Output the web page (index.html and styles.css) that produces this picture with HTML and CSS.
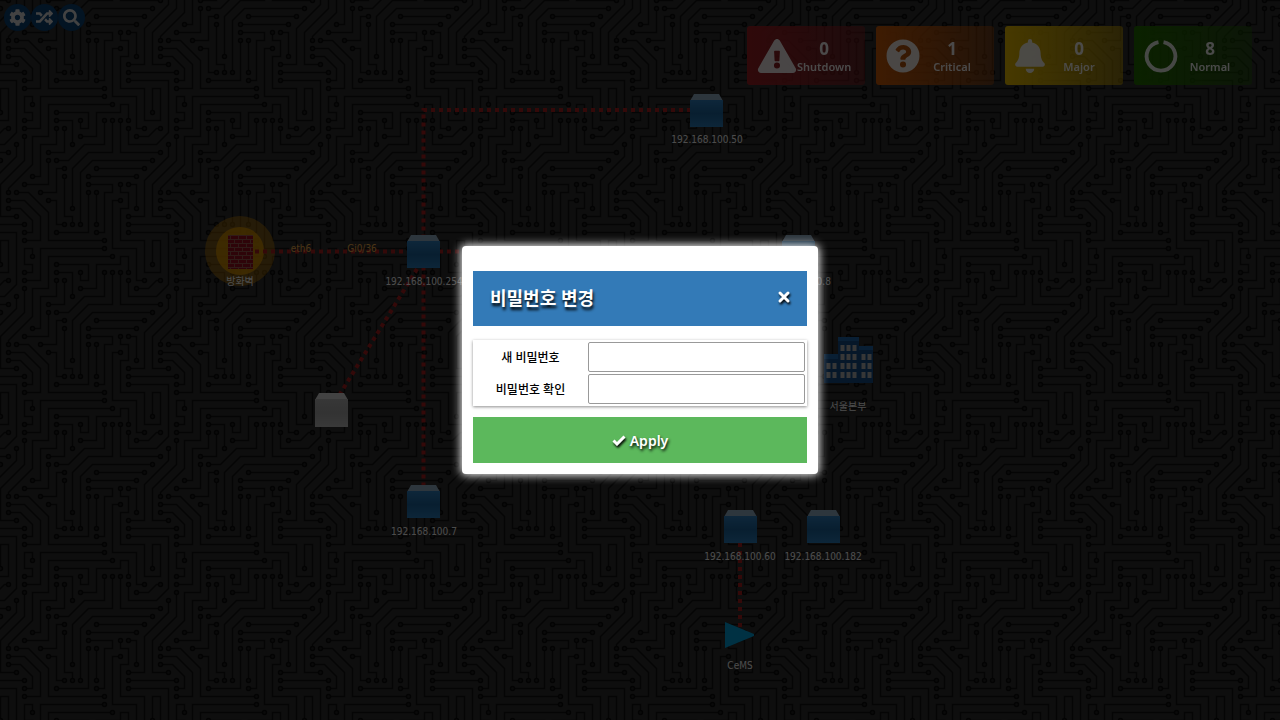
FILE: index.html
```html
<!DOCTYPE html>
<html lang="ko">
<head>
<meta charset="utf-8">
<title>비밀번호 변경</title>
<link rel="stylesheet" href="styles.css">
</head>
<body>
<svg class="map" aria-label="Network map">
  <defs>
    <marker id="pad" markerUnits="userSpaceOnUse" markerWidth="8" markerHeight="8" refX="4" refY="4">
      <circle class="pad" cx="4" cy="4" r="2"/>
    </marker>
    <g id="traces" class="traces">
      <path d="M120 120V152H160"/>
      <path d="M72 208V168L88 152H112V120"/>
      <path d="M104 120V144H84L68 160H56"/>
      <path d="M152 160H92L80 172V224"/>
      <path d="M96 168H144"/>
      <path d="M88 176H136"/>
      <path d="M88 32H112V40H104V80H96"/>
      <path d="M120 32V40H128V56H120V88H144V120H160V88H152V112"/>
      <path d="M120 48H112V96H136V128H144"/>
      <path d="M128 32H136V56"/>
      <path d="M96 40V72"/>
      <path d="M88 40V80H56"/>
      <path d="M48 48H56V72H64"/>
      <path d="M64 24V64H72V72"/>
      <path d="M64 16H56V40H40"/>
      <path d="M48 8V32H24"/>
      <path d="M56 128V144H40V176H32"/>
      <path d="M64 128V152H48"/>
      <path d="M56 120H72V144"/>
      <path d="M56 112H88V128H80V120"/>
      <path d="M80 136H96V112H120V104H128V120"/>
      <path d="M128 128V144H156L168 132V80H128"/>
      <path d="M136 136H148L156 128H160"/>
      <path d="M112 104H48V136H32V164L8 188V192"/>
      <path d="M104 96H40V128H24"/>
      <path d="M104 88H48V60L28 40H16"/>
      <path d="M8 48H24L40 64V88H24"/>
      <path d="M8 56H20L32 68V80H24"/>
      <path d="M128 72H176"/>
      <path d="M168 216H152V184L176 160V136"/>
      <path d="M128 216H144V180L168 156V144"/>
      <path d="M32 104V96H24V112H32V120H24"/>
    </g>
    <pattern id="board" width="152" height="152" patternUnits="userSpaceOnUse">
      <g transform="translate(.5 .5)">
        <use href="#traces"/>
        <use href="#traces" x="-152"/>
        <use href="#traces" y="-152"/>
        <use href="#traces" x="-152" y="-152"/>
      </g>
    </pattern>
    <linearGradient id="blueFace" x2="0" y2="1">
      <stop offset="0" stop-color="#2f82c4"/>
      <stop offset=".5" stop-color="#1c67a0"/>
      <stop offset="1" stop-color="#2c80c0"/>
    </linearGradient>
    <linearGradient id="greyFace" x2="0" y2="1">
      <stop offset="0" stop-color="#b8b8b8"/>
      <stop offset=".5" stop-color="#aaa"/>
      <stop offset="1" stop-color="#c0c0c0"/>
    </linearGradient>
    <g id="box">
      <path fill="#98b4cc" d="M-12-17H13L17-10H-16Z"/>
      <path fill="url(#blueFace)" d="M-16-11H17V16H-16Z"/>
    </g>
    <pattern id="bricks" width="8" height="8" patternUnits="userSpaceOnUse" x="228" y="235">
      <rect width="8" height="8" fill="#9c1020"/>
      <path d="M0 .5H8M0 4.500H8M2.500 .5V4.500M6.500 4.500V8" stroke="#a05a50" fill="none"/>
    </pattern>
  </defs>

  <rect class="ground" width="100%" height="100%"/>
  <rect width="100%" height="100%" fill="url(#board)"/>

  <circle cx="240" cy="251" r="35" fill="#ffa500" opacity=".38"/>
  <circle cx="240" cy="251" r="24" fill="#e09800" opacity=".8"/>

  <g class="edges">
    <path d="M691 110H423.500V486"/>
    <path d="M255 251.500H790"/>
    <path d="M417 269L340 394"/>
    <path d="M740 543V628"/>
  </g>

  <rect x="228" y="235" width="25" height="34" fill="url(#bricks)"/>
  <use href="#box" x="706" y="111"/>
  <use href="#box" x="423" y="252"/>
  <use href="#box" x="798" y="252"/>
  <use href="#box" x="423" y="502"/>
  <use href="#box" x="740" y="527"/>
  <use href="#box" x="823" y="527"/>
  <path fill="#dcdcdc" d="M319 393H344L348 400H315Z"/>
  <path fill="url(#greyFace)" d="M315 399H348V427H315Z"/>
  <path fill="#00a5e0" d="M725 622L754 634V636L725 648Z"/>

  <g>
    <path fill="#2069b0" d="M824 354H838V383H824ZM838 337H859V383H838ZM859 346H873V383H859Z"/>
    <path fill="#174f8a" d="M824 359H838V383H824ZM838 341H859V383H838ZM859 350H873V383H859Z"/>
    <path class="windows" d="M842.500 345V378M848.500 345V378M854.500 345V378M863.500 354V378M869.500 354V378M828.500 363V378M834.500 363V378"/>
  </g>

  <g class="labels">
    <text x="707" y="143">192.168.100.50</text>
    <text x="424" y="285">192.168.100.254</text>
    <text x="798" y="285">192.168.100.8</text>
    <text x="240" y="285">방화벽</text>
    <text x="848" y="410">서울본부</text>
    <text x="424" y="535">192.168.100.7</text>
    <text x="740" y="560">192.168.100.60</text>
    <text x="823" y="560">192.168.100.182</text>
    <text x="740" y="669">CeMS</text>
    <text class="port" x="301" y="252">eth6</text>
    <text class="port" x="362" y="252">Gi0/36</text>
  </g>
</svg>

<nav class="tools">
  <button class="tool" aria-label="Settings"><svg viewBox="0 0 512 512"><path d="M487.400 315.700l-42.600-24.600c4.300-23.200 4.300-47 0-70.200l42.600-24.600c4.900-2.800 7.100-8.600 5.500-14-11.100-35.600-30-67.800-54.700-94.600-3.800-4.100-10-5.100-14.800-2.300L380.800 110c-17.900-15.400-38.500-27.300-60.800-35.100V25.800c0-5.600-3.900-10.500-9.400-11.700-36.700-8.200-74.300-7.800-109.200 0-5.500 1.200-9.400 6.100-9.400 11.700V75c-22.200 7.900-42.800 19.800-60.800 35.100L88.700 85.500c-4.900-2.800-11-1.900-14.800 2.300-24.700 26.700-43.600 58.900-54.700 94.600-1.700 5.400.6 11.200 5.500 14L67.300 221c-4.300 23.200-4.300 47 0 70.200l-42.600 24.600c-4.900 2.800-7.100 8.600-5.500 14 11.100 35.600 30 67.800 54.700 94.600 3.800 4.100 10 5.100 14.800 2.300l42.600-24.600c17.900 15.400 38.500 27.300 60.800 35.100v49.200c0 5.600 3.900 10.500 9.400 11.700 36.700 8.200 74.300 7.800 109.200 0 5.500-1.200 9.400-6.100 9.400-11.700v-49.200c22.200-7.900 42.800-19.800 60.800-35.100l42.600 24.600c4.900 2.800 11 1.900 14.800-2.300 24.700-26.700 43.600-58.900 54.700-94.600 1.500-5.500-.7-11.300-5.600-14.100zM256 336c-44.100 0-80-35.900-80-80s35.900-80 80-80 80 35.900 80 80-35.900 80-80 80z"/></svg></button>
  <button class="tool" aria-label="Shuffle"><svg viewBox="0 0 512 512"><path d="M505 359c9 9 9 25 0 34l-80 80c-15 15-41 4-41-17v-40h-58c-3 0-7-1-9-4l-70-75 53-57 53 56h31v-40c0-21 26-32 41-17zM12 176h84l53 56 53-57-70-75c-2-3-5-4-9-4H12c-7 0-12 5-12 12v56c0 7 5 12 12 12zm372 0v40c0 21 26 32 41 17l80-80c9-9 9-25 0-34l-80-80c-15-15-41-4-41 17v40h-58c-3 0-7 1-9 4L96 336H12c-7 0-12 5-12 12v56c0 7 5 12 12 12h111c4 0 7-1 9-4l221-236z"/></svg></button>
  <button class="tool" aria-label="Search"><svg viewBox="0 0 512 512"><path d="M505 442.700L405.300 343c-4.500-4.500-10.600-7-17-7H372c27.600-35.300 44-79.700 44-128C416 93.100 322.900 0 208 0S0 93.100 0 208s93.100 208 208 208c48.300 0 92.700-16.400 128-44v16.300c0 6.400 2.500 12.500 7 17l99.700 99.700c9.400 9.400 24.600 9.400 33.900 0l28.300-28.300c9.400-9.400 9.400-24.600.1-34zM208 336c-70.700 0-128-57.200-128-128 0-70.700 57.200-128 128-128 70.700 0 128 57.200 128 128 0 70.700-57.200 128-128 128z"/></svg></button>
</nav>

<section class="status" aria-label="Status">
  <article class="card shutdown">
    <svg class="wide" viewBox="0 0 576 512"><path d="M569.500 440c18.500 32-4.700 72-41.600 72H48.100c-36.900 0-60-40-41.600-72L246.400 24c18.500-32 64.700-32 83.200 0zM288 354a46 46 0 1 0 0 92 46 46 0 0 0 0-92zm-43.700-165.300l7.400 136c.4 6.400 5.600 11.300 12 11.300h48.500c6.400 0 11.600-5 12-11.300l7.400-136c.4-6.900-5.100-12.700-12-12.700h-63.400c-6.800 0-12.300 5.800-11.900 12.700z"/></svg>
    <p class="count"><strong>0</strong><span>Shutdown</span></p>
  </article>
  <article class="card critical">
    <svg viewBox="0 0 512 512"><path d="M504 256a248 248 0 1 1-496 0 248 248 0 0 1 496 0zM262.700 90c-54.500 0-89.300 23-116.500 63.800-3.500 5.300-2.400 12.400 2.700 16.300l34.700 26.300c5.200 3.900 12.600 3 16.700-2.100 17.800-22.700 30.100-35.800 57.300-35.800 20.400 0 45.700 13.100 45.700 33 0 15-12.400 22.700-32.500 34C247.100 238.500 216 254.900 216 296v4c0 6.600 5.400 12 12 12h56c6.600 0 12-5.400 12-12v-1.300c0-28.500 83.200-29.600 83.200-106.700 0-58-60.200-102-116.500-102zM256 338a46 46 0 1 0 0 92 46 46 0 0 0 0-92z"/></svg>
    <p class="count"><strong>1</strong><span>Critical</span></p>
  </article>
  <article class="card major">
    <svg class="narrow" viewBox="0 0 448 512"><path d="M224 512c35.300 0 64-28.700 64-64H160c0 35.300 28.600 64 64 64zm215.400-149.700c-19.300-20.800-55.500-52-55.500-154.300 0-77.700-54.500-139.900-127.900-155.200V32a32 32 0 1 0-64 0v20.800C118.600 68.100 64.100 130.300 64.100 208c0 102.300-36.200 133.500-55.500 154.300-6 6.400-8.700 14.100-8.600 21.700.1 16.400 13 32 32.100 32h383.800c19.100 0 32-15.600 32.100-32 0-7.600-2.600-15.300-8.600-21.700z"/></svg>
    <p class="count"><strong>0</strong><span>Major</span></p>
  </article>
  <article class="card normal">
    <svg viewBox="0 0 512 512"><path class="ring" d="M294 47A216 216 0 1 1 218 47"/></svg>
    <p class="count"><strong>8</strong><span>Normal</span></p>
  </article>
</section>

<div class="overlay">
  <form class="dialog" role="dialog" aria-labelledby="title">
    <header class="heading">
      <h1 id="title">비밀번호 변경</h1>
      <button type="button" class="close" aria-label="Close"><svg viewBox="0 0 12 12"><path d="M2 2L10 10M10 2L2 10"/></svg></button>
    </header>
    <div class="fields">
      <label for="pw">새 비밀번호</label><input id="pw" type="password">
      <label for="pw2">비밀번호 확인</label><input id="pw2" type="password">
    </div>
    <button type="button" class="apply"><svg viewBox="0 0 14 12"><path d="M1.500 6.500L5 10L12.500 2.500"/></svg>Apply</button>
  </form>
</div>
</body>
</html>
```
FILE: styles.css
```css
* { box-sizing: border-box; }

body {
  margin: 0;
  min-height: 100vh;
  overflow: hidden;
  background: #323232;
  font-family: "Noto Sans", "Noto Sans CJK KR", sans-serif;
}

button {
  border: 0;
  padding: 0;
  font: inherit;
  cursor: pointer;
}

/* Network map */
.map {
  position: fixed;
  inset: 0;
  width: 100%;
  height: 100%;
}
.ground { fill: #2f2f2f; }
.traces path {
  fill: none;
  stroke: #111;
  stroke-width: 1.5px;
  marker-start: url(#pad);
  marker-end: url(#pad);
}
.pad {
  fill: #242424;
  stroke: #0c0c0c;
  stroke-width: 1.5px;
}
.edges path {
  fill: none;
  stroke: #b02020;
  stroke-width: 4px;
  stroke-dasharray: 4 4;
}
.windows {
  fill: none;
  stroke: #b8b8b8;
  stroke-width: 4px;
  stroke-dasharray: 6 3;
}
.labels {
  fill: #fff;
  font: 10px "DejaVu Sans Condensed", "Noto Sans CJK KR", sans-serif;
  text-anchor: middle;
}
.port { fill: #f5b04a; }

/* Tool buttons */
.tools {
  position: fixed;
  top: 4px;
  left: 4px;
  display: flex;
}
.tool {
  display: grid;
  place-items: center;
  width: 27px;
  height: 27px;
  border-radius: 50%;
  background: #0b4376;
}
.tool svg {
  width: 17px;
  height: 17px;
  fill: #ddd;
}

/* Status cards */
.status {
  position: fixed;
  top: 26px;
  right: 28px;
  display: flex;
  gap: 11px;
}
.card {
  display: flex;
  align-items: center;
  width: 118px;
  height: 59px;
  padding-left: 10px;
  border-radius: 3px;
  color: #fff;
}
.card svg {
  flex: none;
  width: 34px;
  height: 34px;
  fill: #fff;
  opacity: 0.9;
}
.card .wide { width: 40px; }
.card .narrow { width: 30px; }
.card .ring {
  fill: none;
  stroke: #fff;
  stroke-width: 58px;
}
.count {
  flex: 1;
  display: flex;
  flex-direction: column;
  margin: 0;
  padding: 2px 12px 0 2px;
  text-align: center;
  opacity: 0.95;
}
.card .wide + .count { flex: none; padding: 2px 0 0; }
.count strong { font-size: 17px; line-height: 20px; }
.count span { font-size: 11px; font-weight: 600; line-height: 16px; }
.shutdown { background: linear-gradient(to right, #a02024, rgba(160, 32, 36, 0.45)); }
.critical { background: linear-gradient(to right, #d05c08, rgba(208, 92, 8, 0.4)); }
.major { background: linear-gradient(to right, #eec000, rgba(238, 192, 0, 0.5)); }
.normal { background: linear-gradient(to right, #247000, rgba(36, 112, 0, 0.4)); }

/* Dialog */
.overlay {
  position: fixed;
  inset: 0;
  display: grid;
  place-items: center;
  background: rgba(0, 0, 0, 0.7);
}
.dialog {
  width: 356px;
  padding: 25px 11px 11px;
  border-radius: 4px;
  background: #fff;
  box-shadow: 0 0 10px 1px #fff;
}
.heading {
  display: flex;
  align-items: center;
  justify-content: space-between;
  padding: 14px 17px;
  background: #337ab7;
  color: #fff;
}
.heading h1 {
  margin: 0;
  font-size: 18px;
  line-height: 27px;
  text-shadow: 1px 3px 3px #000;
}
.close {
  height: 12px;
  margin-bottom: 4px;
  background: none;
}
.close svg {
  display: block;
  width: 12px;
  height: 12px;
  overflow: visible;
  fill: none;
  stroke: #fff;
  stroke-width: 3px;
  stroke-linecap: round;
  filter: drop-shadow(1px 2px 1px #000);
}
.fields {
  display: grid;
  grid-template-columns: 1fr 217px;
  gap: 2px;
  align-items: center;
  margin: 14px 0 11px;
  padding: 2px;
  box-shadow: 0 1px 3px rgba(0, 0, 0, 0.45);
}
.fields label {
  color: #000;
  font-size: 12px;
  font-weight: 500;
  text-align: center;
}
.fields input {
  width: 100%;
  height: 30px;
  border: 1px solid #999;
  border-radius: 2px;
  background: #fff;
}
.apply {
  display: flex;
  align-items: center;
  justify-content: center;
  gap: 4px;
  width: 100%;
  height: 46px;
  background: #5cb85c;
  color: #fff;
  font-size: 14px;
  font-weight: 600;
  text-shadow: 1px 2px 3px #000;
}
.apply svg {
  width: 14px;
  height: 12px;
  fill: none;
  stroke: #fff;
  stroke-width: 3px;
  filter: drop-shadow(1px 2px 1px #000);
}
```
